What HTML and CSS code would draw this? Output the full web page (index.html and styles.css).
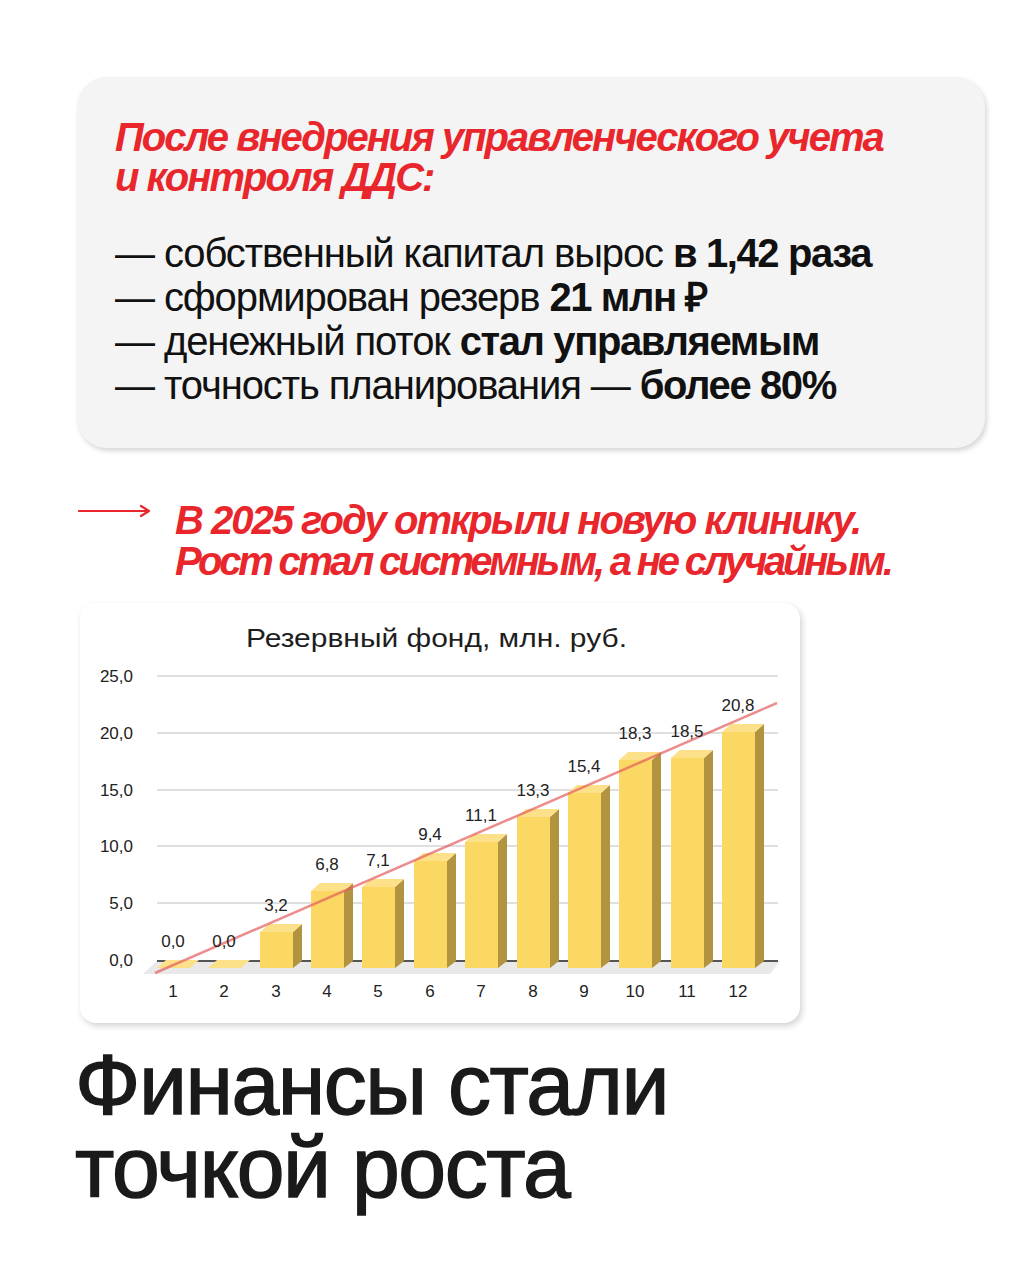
FILE: index.html
```html
<!DOCTYPE html>
<html lang="ru">
<head>
<meta charset="utf-8">
<link rel="stylesheet" href="styles.css">
</head>
<body>
<div class="page">
  <section class="card">
    <h2 class="card-title">После внедрения управленческого учета<br>и контроля ДДС:</h2>
    <ul class="facts">
      <li>— собственный капитал вырос <b>в 1,42 раза</b></li>
      <li>— сформирован резерв <b>21 млн ₽</b></li>
      <li>— денежный поток <b>стал управляемым</b></li>
      <li>— точность планирования — <b>более 80%</b></li>
    </ul>
  </section>

  <div class="callout">
    <svg class="arrow" width="74" height="14" viewBox="0 0 74 14">
      <path d="M1 7 H71 M63 2 L71 7 L63 12" fill="none" stroke="#e8262b" stroke-width="2.2" stroke-linecap="round" stroke-linejoin="round"/>
    </svg>
    <p class="callout-text">В 2025 году открыли новую клинику.<br><span class="tight">Рост стал системным, а не случайным.</span></p>
  </div>

  <figure class="chart">
    <svg class="chart-svg" width="720" height="420" viewBox="0 0 720 420">
      <text class="c-title" x="166" y="44" textLength="381" lengthAdjust="spacingAndGlyphs">Резервный фонд, млн. руб.</text>
      <g class="grid">
        <line x1="77" y1="73" x2="698" y2="73"/>
        <line x1="77" y1="130" x2="698" y2="130"/>
        <line x1="77" y1="187" x2="698" y2="187"/>
        <line x1="77" y1="243" x2="698" y2="243"/>
        <line x1="77" y1="300" x2="698" y2="300"/>
      </g>
      <g class="ylab" text-anchor="end">
        <text x="53" y="79">25,0</text>
        <text x="53" y="136">20,0</text>
        <text x="53" y="193">15,0</text>
        <text x="53" y="249">10,0</text>
        <text x="53" y="306">5,0</text>
        <text x="53" y="363">0,0</text>
      </g>
      <polygon class="floor" points="63,371 690,371 700,358 77,358"/>
      <line class="zero" x1="77" y1="358" x2="698" y2="358"/>
      <g class="bars">
        <polygon class="top" points="77,365 110,365 119,357 86,357"/>
        <polygon class="top" points="128,365 161,365 170,357 137,357"/>
        <rect class="front" x="180" y="329" width="33" height="36"/>
        <polygon class="side" points="213,329 222,321 222,358 213,365"/>
        <polygon class="top" points="180,329 213,329 222,321 189,321"/>
        <rect class="front" x="231" y="288" width="33" height="77"/>
        <polygon class="side" points="264,288 273,280 273,358 264,365"/>
        <polygon class="top" points="231,288 264,288 273,280 240,280"/>
        <rect class="front" x="282" y="284" width="33" height="81"/>
        <polygon class="side" points="315,284 324,276 324,358 315,365"/>
        <polygon class="top" points="282,284 315,284 324,276 291,276"/>
        <rect class="front" x="334" y="258" width="33" height="107"/>
        <polygon class="side" points="367,258 376,250 376,358 367,365"/>
        <polygon class="top" points="334,258 367,258 376,250 343,250"/>
        <rect class="front" x="385" y="239" width="33" height="126"/>
        <polygon class="side" points="418,239 427,231 427,358 418,365"/>
        <polygon class="top" points="385,239 418,239 427,231 394,231"/>
        <rect class="front" x="437" y="214" width="33" height="151"/>
        <polygon class="side" points="470,214 479,206 479,358 470,365"/>
        <polygon class="top" points="437,214 470,214 479,206 446,206"/>
        <rect class="front" x="488" y="190" width="33" height="175"/>
        <polygon class="side" points="521,190 530,182 530,358 521,365"/>
        <polygon class="top" points="488,190 521,190 530,182 497,182"/>
        <rect class="front" x="539" y="157" width="33" height="208"/>
        <polygon class="side" points="572,157 581,149 581,358 572,365"/>
        <polygon class="top" points="539,157 572,157 581,149 548,149"/>
        <rect class="front" x="591" y="155" width="33" height="210"/>
        <polygon class="side" points="624,155 633,147 633,358 624,365"/>
        <polygon class="top" points="591,155 624,155 633,147 600,147"/>
        <rect class="front" x="642" y="129" width="33" height="236"/>
        <polygon class="side" points="675,129 684,121 684,358 675,365"/>
        <polygon class="top" points="642,129 675,129 684,121 651,121"/>
      </g>
      <line class="trend" x1="75" y1="370" x2="697" y2="100"/>
      <g class="vlab" text-anchor="middle">
        <text x="93" y="344">0,0</text>
        <text x="144" y="344">0,0</text>
        <text x="196" y="308">3,2</text>
        <text x="247" y="267">6,8</text>
        <text x="298" y="263">7,1</text>
        <text x="350" y="237">9,4</text>
        <text x="401" y="218">11,1</text>
        <text x="453" y="193">13,3</text>
        <text x="504" y="169">15,4</text>
        <text x="555" y="136">18,3</text>
        <text x="607" y="134">18,5</text>
        <text x="658" y="108">20,8</text>
      </g>
      <g class="xlab" text-anchor="middle">
        <text x="93" y="394">1</text>
        <text x="144" y="394">2</text>
        <text x="196" y="394">3</text>
        <text x="247" y="394">4</text>
        <text x="298" y="394">5</text>
        <text x="350" y="394">6</text>
        <text x="401" y="394">7</text>
        <text x="453" y="394">8</text>
        <text x="504" y="394">9</text>
        <text x="555" y="394">10</text>
        <text x="607" y="394">11</text>
        <text x="658" y="394">12</text>
      </g>
    </svg>
  </figure>

  <h1 class="headline">Финансы стали<br>точкой роста</h1>
</div>
</body>
</html>
```

FILE: styles.css
```css
* { box-sizing: border-box; }
html, body { margin: 0; padding: 0; background: #ffffff; }
body { width: 1024px; height: 1280px; overflow: hidden; font-family: "Liberation Sans", Arial, sans-serif; color: #111; }

.page {
  display: flex;
  flex-direction: column;
  align-items: flex-start;
  padding: 77px 0 0 77px;
}

.card {
  width: 908px;
  height: 371px;
  background: #f4f4f4;
  border-radius: 30px;
  padding: 40px 38px 0 38px;
  box-shadow: 2px 3px 5px rgba(0,0,0,0.16);
}

.card-title {
  margin: 0;
  font-size: 40px;
  line-height: 40px;
  font-weight: 700;
  font-style: italic;
  letter-spacing: -2px;
  color: #e8262b;
}

.facts {
  list-style: none;
  margin: 34px 0 0 0;
  padding: 0;
  font-size: 40px;
  line-height: 44px;
  letter-spacing: -1.1px;
  color: #111;
}
.facts b { font-weight: 700; letter-spacing: -1.4px; }

.callout {
  display: flex;
  align-items: flex-start;
  margin-top: 52px;
  margin-left: 1px;
}
.arrow { display: block; margin-top: 4px; flex: none; }
.callout-text {
  margin: 0 0 0 23px;
  font-size: 40px;
  line-height: 41px;
  font-weight: 700;
  font-style: italic;
  letter-spacing: -2px;
  color: #e8262b;
}
.callout-text .tight { letter-spacing: -3.2px; }

.chart {
  margin: 21px 0 0 3px;
  width: 720px;
  height: 420px;
  background: #fff;
  border-radius: 16px;
  box-shadow: 2px 3px 6px rgba(0,0,0,0.18);
  overflow: hidden;
}
.chart-svg { display: block; font-family: "Liberation Sans", Arial, sans-serif; }
.c-title { font-size: 26px; fill: #1e1e1e; }
.grid line { stroke: #d4d4d4; stroke-width: 1.5; }
.zero { stroke: #555; stroke-width: 2; }
.floor { fill: #e9e9e9; }
.ylab text, .vlab text, .xlab text { font-size: 17px; fill: #222; }
.front { fill: #fbd764; }
.top { fill: #fde18a; }
.side { fill: #b2933f; }
.trend { stroke: rgba(228, 92, 92, 0.7); stroke-width: 2.5; }

.headline {
  margin: 20px 0 0 -2px;
  font-size: 86px;
  line-height: 83px;
  font-weight: 400;
  letter-spacing: -1.5px;
  color: #1a1a1a;
  -webkit-text-stroke: 1.4px #1a1a1a;
}
```
